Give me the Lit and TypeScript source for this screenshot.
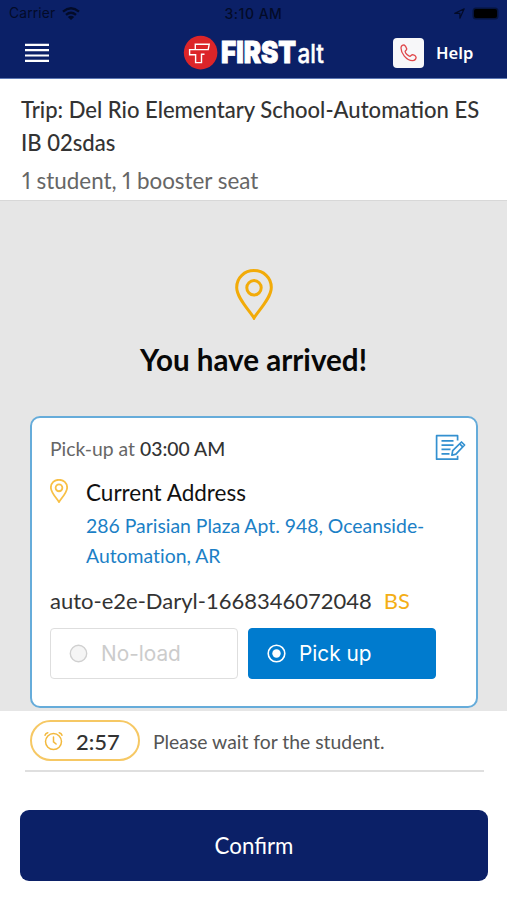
import { LitElement, html, svg, css } from "lit";
import { customElement } from "lit/decorators.js";

const pinShape = () =>
  svg`<path d="M19 49C15 42 1.7 29 1.7 18.4C1.7 8.5 9.5 1.6 19 1.6S36.3 8.5 36.3 18.4C36.3 29 23 42 19 49Z"/><circle cx="19" cy="18.8" r="7.2"/>`;

@customElement("app-header")
class AppHeader extends LitElement {
  static styles = css`
    :host { display: block; height: 79px; background: #0b2067; box-sizing: border-box; border-bottom: 1px solid #5d78b4; overflow: hidden; }
    svg { display: block; }
    .status { display: grid; grid-template-columns: 1fr auto 1fr; height: 27px; align-items: center; color: #030b28; font: 13.8px/27px Inter, sans-serif; }
    .carrier { display: flex; align-items: center; gap: 7px; padding-left: 9px; letter-spacing: 0.15px; }
    .clock { font-weight: 500; font-size: 14px; letter-spacing: 0.5px; }
    .right { display: flex; justify-content: flex-end; align-items: center; gap: 9px; padding-right: 10px; }
    .battery { width: 23px; height: 9px; background: #000; border-radius: 2px; box-shadow: 0 0 0 1.5px #06143f; }
    .bar { display: grid; grid-template-columns: 183px 210px 1fr; align-items: center; height: 51px; }
    .menu { width: 24px; height: 20px; margin-left: 25px; }
    .help { display: flex; align-items: center; gap: 12px; color: #fff; font: 600 17px/24px "Noto Sans", sans-serif; }
    .help b { font-weight: 600; font-size: 16.6px; }
    .phone { width: 31px; height: 30px; border-radius: 4px; background: #f7f7f9; display: flex; align-items: center; justify-content: center; }
  `;
  render() {
    return html`
      <div class="status">
        <div class="carrier"><span>Carrier</span>
          <svg width="18" height="13" viewBox="0 0 18 13" fill="none" stroke="#030b28" stroke-width="2.3">
            <path d="M1 4.6Q9-2.2 17 4.6"/><path d="M4 7.8Q9 3.6 14 7.8"/><path d="M9 13L5.8 9.9Q9 7.4 12.2 9.9Z" fill="#030b28" stroke="none"/>
          </svg>
        </div>
        <div class="clock">3:10 AM</div>
        <div class="right">
          <svg width="11" height="11" viewBox="0 0 11 11" fill="none" stroke="#030b28" stroke-width="1.2" stroke-linejoin="round"><path d="M.8 5.4L10.2.8L5.9 10.2V5.4Z"/></svg>
          <span class="battery"></span>
        </div>
      </div>
      <div class="bar">
        <svg class="menu" viewBox="0 0 24 20" stroke="#fff" stroke-width="2.1"><path d="M0 1.9H24M0 7.1H24M0 12.5H24M0 17.9H24"/></svg>
        <svg width="150" height="36" viewBox="0 0 150 36">
          <circle cx="17.6" cy="17.6" r="16.8" fill="#dc2529"/>
          <path d="M12.3 14.3V9.3H26.2L25.2 14.6H6.6V19.8H12.6V27.6H18.5V19.3H21.5" fill="none" stroke="#fff" stroke-width="1.4"/>
          <text x="38" y="28.2" textLength="75" lengthAdjust="spacingAndGlyphs" fill="#fff" stroke="#fff" stroke-width="0.9" font-family="Inter, sans-serif" font-weight="900" font-size="29.5">FIRST</text>
          <text x="114.5" y="28.2" textLength="26.5" lengthAdjust="spacingAndGlyphs" fill="#fff" stroke="#fff" stroke-width="0.4" font-family="Inter, sans-serif" font-weight="500" font-size="26">alt</text>
        </svg>
        <div class="help">
          <span class="phone">
            <svg width="17" height="18" viewBox="0 0 17 18" fill="none" stroke="#e0474a" stroke-width="1.3" stroke-linejoin="round"><path d="M1.1 3.1C1.5 1.5 2.8.9 4 .9C5 1.3 6.3 3.5 6.7 4.8C6.9 6 5.2 6.7 5.1 7.5C5.3 9.4 8.2 12 9.9 12.3C10.9 12.2 11.4 10.5 12.7 10.6C14 10.9 15.7 12 16.1 13.1C16 14.9 14.4 16.5 12.5 16.7C6.6 16.5.4 9.3 1.1 3.1Z"/></svg>
          </span>
          <b>Help</b>
        </div>
      </div>`;
  }
}

@customElement("stop-card")
class StopCard extends LitElement {
  static styles = css`
    :host { display: block; box-sizing: border-box; width: 448px; height: 292px; margin-left: 30px; border: 2px solid #66acda; border-radius: 10px; background: #fff; padding: 16px 10px 0 18px; }
    svg { display: block; }
    .top { display: flex; justify-content: space-between; height: 30px; color: #666; font-size: 19.35px; line-height: 30px; }
    .top b { color: #333; font-weight: 500; }
    .place { display: flex; gap: 18px; padding-top: 13px; }
    .place svg { margin-top: 2px; flex: none; }
    .name { font-size: 22.5px; line-height: 32px; color: #111; }
    .street { font-size: 19.4px; line-height: 29.5px; color: #1b80c6; padding-top: 2px; white-space: nowrap; font-variant-ligatures: none; }
    .student { display: flex; gap: 12px; padding-top: 15px; font-size: 22px; line-height: 32px; color: #333; }
    .student i { font-style: normal; color: #f4ae16; }
    .choices { display: flex; gap: 10px; padding-top: 11px; }
    .choice { box-sizing: border-box; width: 188px; height: 51px; border-radius: 4px; border: 1px solid #dedede; display: flex; align-items: center; gap: 13px; padding-left: 18px; color: #ccc; font: 20.8px/30px Inter, sans-serif; }
    .on { background: #007bce; border-color: #007bce; color: #fff; }
  `;
  render() {
    return html`
      <div class="top"><span>Pick-up at <b>03:00 AM</b></span>
        <svg width="31" height="27" viewBox="0 0 31 27" fill="none" stroke="#3390d0" stroke-width="1.7" stroke-linejoin="round">
          <path d="M22.6 6.5V1.7H1.6V25.2H22.6V21.8M6.5 6.8H18.5M6.5 11.1H18.5M6.5 15.3H15.5M6.5 19.8H14.5"/>
          <path d="M16.9 21.2L17.7 16.7L26.5 8L29.6 11L20.9 20.1ZM24.7 9.9L27.7 12.9"/>
        </svg>
      </div>
      <div class="place">
        <svg width="18" height="24" viewBox="0 0 38 51" fill="none" stroke="#f8c046" stroke-width="3.8">${pinShape()}</svg>
        <div><div class="name">Current Address</div>
          <div class="street">286 Parisian Plaza Apt. 948, Oceanside-<br>Automation, AR</div></div>
      </div>
      <div class="student"><span>auto-e2e-Daryl-1668346072048</span><i>BS</i></div>
      <div class="choices">
        <div class="choice"><svg width="19" height="19" viewBox="0 0 19 19"><circle cx="9.5" cy="9.5" r="8.2" fill="#f5f5f5" stroke="#d0d0d0" stroke-width="1.4"/></svg>No-load</div>
        <div class="choice on"><svg width="19" height="19" viewBox="0 0 19 19"><circle cx="9.5" cy="9.5" r="8.3" fill="none" stroke="#fff" stroke-width="1.6"/><circle cx="9.5" cy="9.5" r="4.2" fill="#fff"/></svg>Pick up</div>
      </div>`;
  }
}

@customElement("app-root")
class AppRoot extends LitElement {
  static styles = css`
    :host { display: block; width: 507px; height: 900px; overflow: hidden; background: #fff; font-family: Lato, sans-serif; }
    svg { display: block; }
    .trip { height: 122px; box-sizing: border-box; padding: 14px 20px 0 21px; border-bottom: 1px solid #d8d8d8; white-space: nowrap; }
    .title { font-size: 22.05px; line-height: 33px; font-weight: 500; color: #333; }
    .sub { font-size: 22.4px; line-height: 33px; color: #666; padding: 5px 0 0 1px; font-variant-numeric: proportional-nums; }
    .stage { height: 510px; box-sizing: border-box; background: #e6e6e6; padding-top: 68px; }
    .stage > svg { margin: 0 auto; }
    h1 { margin: 20px 0 36px; text-align: center; font-size: 29.6px; line-height: 40px; font-weight: 700; color: #080808; height: 40px; }
    .wait { display: flex; align-items: center; margin: 0 23px 0 25px; padding-left: 5px; height: 61px; border-bottom: 2px solid #dfdfdf; box-sizing: border-box; gap: 13px; color: #555; font-size: 19.35px; }
    .message { padding-top: 2px; }
    .timer { display: flex; align-items: center; box-sizing: border-box; width: 110px; height: 41px; border: 2px solid #f6c864; border-radius: 21px; padding-left: 12px; gap: 13px; font-size: 22px; font-weight: 500; color: #333; }
    .timer span { padding-top: 1px; }
    .confirm { margin: 38px 19px 0 20px; height: 71px; border-radius: 9px; background: #0b2067; color: #fff; display: flex; align-items: center; justify-content: center; font-size: 22.3px; }
  `;
  render() {
    return html`
      <app-header></app-header>
      <div class="trip">
        <div class="title">Trip: Del Rio Elementary School-Automation ES<br>IB 02sdas</div>
        <div class="sub">1 student, 1 booster seat</div>
      </div>
      <div class="stage">
        <svg width="38" height="51" viewBox="0 0 38 51" fill="none" stroke="#f2ab09" stroke-width="3">${pinShape()}</svg>
        <h1>You have arrived!</h1>
        <stop-card></stop-card>
      </div>
      <div class="wait">
        <div class="timer">
          <svg width="19" height="20" viewBox="0 0 19 20" fill="none" stroke="#f3b93d" stroke-width="1.5" stroke-linecap="round"><circle cx="9.5" cy="10.6" r="8"/><path d="M9.5 6V10.8L12.1 13M1 4.2Q1.6 2.2 3.8 1.7M18 4.2Q17.4 2.2 15.2 1.7"/></svg>
          <span>2:57</span>
        </div>
        <span class="message">Please wait for the student.</span>
      </div>
      <div class="confirm">Confirm</div>`;
  }
}
